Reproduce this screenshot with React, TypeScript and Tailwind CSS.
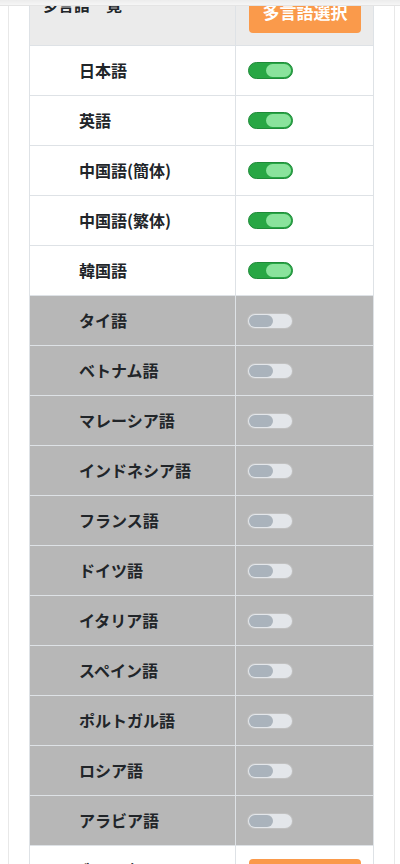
import React from "react";

const onLangs = ["日本語", "英語", "中国語(簡体)", "中国語(繁体)", "韓国語"];
const offLangs = [
  "タイ語",
  "ベトナム語",
  "マレーシア語",
  "インドネシア語",
  "フランス語",
  "ドイツ語",
  "イタリア語",
  "スペイン語",
  "ポルトガル語",
  "ロシア語",
  "アラビア語",
];

function ToggleOn() {
  return (
    <div className="w-[45px] h-[17px] rounded-full bg-[#28a745] border border-[#1f8a39] flex items-center justify-end pr-[1px]">
      <div className="w-[25px] h-[13px] rounded-full bg-[#8ae39c]" />
    </div>
  );
}

function ToggleOff() {
  return (
    <div className="w-[44px] h-[14px] rounded-full bg-[#e3e6ea] flex items-center pl-[1px] shadow-[0_0_0_1px_rgba(255,255,255,0.15)]">
      <div className="w-[24px] h-[12px] rounded-full bg-[#aab3bc]" />
    </div>
  );
}

function Row({ label, on }: { label: string; on: boolean }) {
  return (
    <div
      className={`flex h-[50px] border-b border-[#dee2e6] ${
        on ? "bg-white" : "bg-[#b7b7b7]"
      }`}
    >
      <div className="w-[206px] shrink-0 border-r border-[#dee2e6] flex items-center pl-[49px] pb-[2px] text-[16px] font-bold text-[#212529]">
        {label}
      </div>
      <div className="flex-1 flex items-center pl-[12px]">
        {on ? <ToggleOn /> : <ToggleOff />}
      </div>
    </div>
  );
}

function HeaderRow({ title, bg }: { title: string; bg: string }) {
  return (
    <div className={`flex h-[66px] border-b border-[#dee2e6] ${bg}`}>
      <div className="w-[206px] shrink-0 border-r border-[#dee2e6] pl-[12px] pt-[12px] text-[16px] leading-[24px] font-bold text-[#212529]">
        {title}
      </div>
      <div className="flex-1 pl-[13px] pt-[11px]">
        <div className="w-[112px] h-[42px] rounded-[4px] bg-[#fa9a4b] flex items-center justify-center text-white text-[17px] font-bold">
          多言語選択
        </div>
      </div>
    </div>
  );
}

export default function App() {
  return (
    <div
      className="relative h-[864px] overflow-hidden bg-white"
      style={{ fontFamily: '"Noto Sans CJK JP", "Noto Sans", sans-serif' }}
    >
      <div className="ml-[8px] w-[387px] min-h-[900px] border-x border-[#e8e8e8] px-[20px]">
        <div className="-mt-[20px] border-x border-[#dee2e6]">
          <HeaderRow title="多言語一覧" bg="bg-[#ebebeb]" />
          {onLangs.map((l) => (
            <Row key={l} label={l} on={true} />
          ))}
          {offLangs.map((l) => (
            <Row key={l} label={l} on={false} />
          ))}
          <div className="flex h-[66px] bg-white">
            <div className="w-[206px] shrink-0 border-r border-[#dee2e6] pl-[12px] pt-[12px] text-[16px] leading-[24px] font-bold text-[#212529]">
              カテゴリ一覧
            </div>
            <div className="flex-1 pl-[13px] pt-[13px]">
              <div className="w-[112px] h-[42px] rounded-[4px] bg-[#fa9a4b]" />
            </div>
          </div>
        </div>
      </div>
      <div className="absolute top-0 left-0 right-0 h-[6px] bg-gradient-to-b from-[#ececec] to-[#f6f6f6] border-b border-[#e4e4e4]" />
    </div>
  );
}
